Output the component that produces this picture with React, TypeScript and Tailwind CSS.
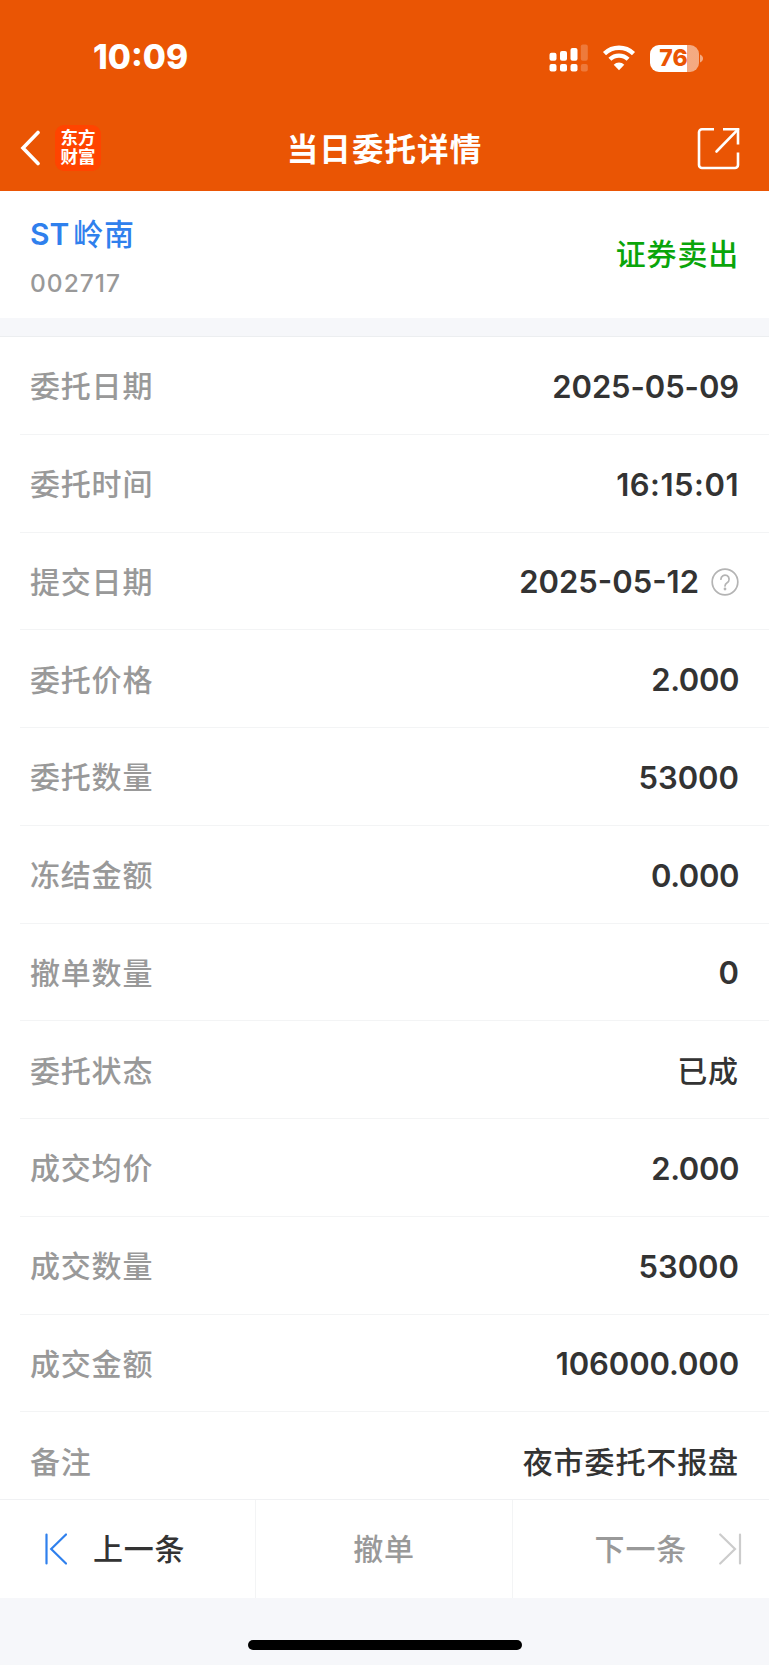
import type { ReactNode } from 'react';

const rows: { label: string; value: string; style?: string; help?: boolean }[] = [
  { label: '委托日期', value: '2025-05-09', style: '-tracking-[0.1px]' },
  { label: '委托时间', value: '16:15:01', style: 'tracking-[0.5px]' },
  { label: '提交日期', value: '2025-05-12', help: true },
  { label: '委托价格', value: '2.000', style: '-tracking-[0.4px]' },
  { label: '委托数量', value: '53000' },
  { label: '冻结金额', value: '0.000', style: '-tracking-[0.4px]' },
  { label: '撤单数量', value: '0' },
  { label: '委托状态', value: '已成', style: 'text-[30px] font-medium tracking-[0.9px]' },
  { label: '成交均价', value: '2.000', style: '-tracking-[0.4px]' },
  { label: '成交数量', value: '53000' },
  { label: '成交金额', value: '106000.000', style: '-tracking-[0.1px]' },
  { label: '备注', value: '夜市委托不报盘', style: 'text-[30px] font-medium tracking-[0.9px]' },
];

const StatusBar = () => (
  <div className="flex h-[108px] items-center justify-between pl-[93px] pr-[66px] pt-[8px]">
    <span className="text-[33.5px] font-extrabold leading-none text-white">10:09</span>
    <div className="flex items-center">
      <svg width="39" height="28" viewBox="0 0 39 28" fill="#fff">
        <rect x="0.5" y="8.7" width="7" height="8" rx="2" />
        <rect x="11" y="7" width="7" height="9.7" rx="2" />
        <rect x="21.5" y="4" width="7" height="12.7" rx="2" />
        <rect x="31.8" y="0.5" width="7" height="16.2" rx="2" opacity="0.22" />
        <rect x="0.5" y="20" width="7" height="7.5" rx="2" />
        <rect x="11" y="20" width="7" height="7.5" rx="2" />
        <rect x="21.5" y="20" width="7" height="7.5" rx="2" />
        <rect x="31.8" y="20" width="7" height="7.5" rx="2" opacity="0.22" />
      </svg>
      <svg className="ml-[14px]" width="34" height="26" viewBox="0 0 34 26" fill="none">
        <path d="M2.5 8.6a21 21 0 0 1 29 0" stroke="#fff" strokeWidth="4.4" />
        <path d="M7.9 14.3a13 13 0 0 1 18.2 0" stroke="#fff" strokeWidth="4.2" />
        <path d="M17 25.2l-5.3-5.5a7.8 7.8 0 0 1 10.6 0z" fill="#fff" />
      </svg>
      <div className="ml-[14px] flex items-center">
        <div className="flex h-[27px] w-[49px] items-center justify-center overflow-hidden rounded-[9px] bg-linear-to-r from-white from-76% to-white/50 to-76% pr-[2px]">
          <span className="text-[23px] font-extrabold leading-none text-[#ea5504]">76</span>
        </div>
        <svg className="ml-[1px]" width="3" height="9" viewBox="0 0 3 9">
          <path d="M0 0.5c4 1.8 4 6.2 0 8z" fill="#fff" opacity="0.5" />
        </svg>
      </div>
    </div>
  </div>
);

const NavBar = () => (
  <div className="grid h-[81px] grid-cols-[1fr_auto_1fr] items-center pl-[20px] pr-[29px]">
    <div className="flex items-center">
      <svg className="-mt-[2px]" width="21" height="36" viewBox="0 0 21 36" fill="none">
        <path d="M18 2.5L3 18l15 15.5" stroke="#fff" strokeWidth="3.6" strokeLinecap="round" />
      </svg>
      <div className="-mt-[2px] ml-[14px] flex h-[46px] w-[46px] flex-col items-center justify-center rounded-[9px] bg-[#ff4400] pb-px text-[17.5px] font-bold leading-[19px] text-white">
        <span>东方</span>
        <span>财富</span>
      </div>
    </div>
    <h1 className="ml-[9px] pt-[2px] text-[31.5px] font-bold leading-none tracking-[1.1px] text-white">当日委托详情</h1>
    <svg className="justify-self-end" width="43" height="43" viewBox="0 0 43 43" fill="none" stroke="#fff" strokeWidth="2.6">
      <path d="M17 2.3H5a3 3 0 0 0-3 3V38a3 3 0 0 0 3 3h33a3 3 0 0 0 3-3V25.5" />
      <path d="M26 2.3h15V17.5" />
      <path d="M41 2.3L19.5 24.5" strokeLinecap="round" />
    </svg>
  </div>
);

const HelpIcon = () => (
  <svg className="ml-[12px]" width="28" height="28" viewBox="0 0 28 28" fill="none" stroke="#b4b4b4" strokeLinecap="round">
    <circle cx="14" cy="14" r="12.8" strokeWidth="1.7" />
    <path d="M9.9 11.2a4.1 4.1 0 1 1 6.2 3.5c-1.5.9-2.1 1.6-2.1 3.3" strokeWidth="1.7" />
    <circle cx="14" cy="21" r="1.4" fill="#b4b4b4" stroke="none" />
  </svg>
);

const Row = ({ label, children }: { label: string; children: ReactNode }) => (
  <div className="ml-[20px] flex h-[97.75px] shrink-0 items-center justify-between border-b border-[#f3f4f5] pl-[10px] pr-[30px] pt-[2px]">
    <span className="text-[30px] font-medium leading-none tracking-[0.8px] text-[#999]">{label}</span>
    <div className="flex items-center text-[31px] font-semibold leading-none text-[#333]">{children}</div>
  </div>
);

const App = () => {
  return (
    <div className="flex h-[1665px] w-[769px] flex-col overflow-hidden bg-[#f6f7fa] font-[Inter,'Noto_Sans_CJK_SC',sans-serif]">
      <header className="h-[191px] shrink-0 bg-[#ea5504]">
        <StatusBar />
        <NavBar />
      </header>

      <section className="flex h-[127px] shrink-0 items-center justify-between bg-white px-[30px]">
        <div className="pt-[3px]">
          <div className="flex items-center text-[30px] font-medium leading-[44px] text-[#2f80ed]">
            <span className="font-semibold">ST</span>
            <span className="ml-[4px] tracking-[0.6px]">岭南</span>
          </div>
          <div className="mt-[10px] text-[24.5px] font-medium leading-[34px] tracking-[1px] text-[#999]">002717</div>
        </div>
        <span className="pb-[2px] text-[30px] font-medium leading-none tracking-[0.8px] text-[#0aa50a]">证券卖出</span>
      </section>

      <section className="mt-[18px] flex h-[1163px] shrink-0 flex-col overflow-hidden border-t border-[#eceef0] bg-white">
        {rows.map((row) => (
          <Row key={row.label} label={row.label}>
            <span className={row.style}>{row.value}</span>
            {row.help && <HelpIcon />}
          </Row>
        ))}
      </section>

      <footer className="grid h-[99px] shrink-0 grid-cols-3 divide-x divide-[#f3f4f5] border-t border-[#f0f1f3] bg-white text-[30px] font-medium leading-none tracking-[0.8px] text-[#999]">
        <button className="flex items-center pl-[44px] text-[#333]">
          <svg width="23" height="32" viewBox="0 0 23 32" fill="none" stroke="#2f80ed" strokeWidth="2.2" strokeLinecap="round">
            <path d="M2.5 1.5v29M22 1.5L7.2 16L22 30.5" />
          </svg>
          <span className="ml-[26px]">上一条</span>
        </button>
        <button className="flex items-center justify-center">撤单</button>
        <button className="flex items-center justify-end pr-[27px]">
          <span>下一条</span>
          <svg className="ml-[32px]" width="23" height="32" viewBox="0 0 23 32" fill="none" stroke="#ccc" strokeWidth="2.2" strokeLinecap="round">
            <path d="M21 1.5v29M1.2 1.5L16 16L1.2 30.5" />
          </svg>
        </button>
      </footer>

      <div className="flex h-[67px] shrink-0 justify-center pt-[42px]">
        <div className="h-[10px] w-[274px] rounded-full bg-black" />
      </div>
    </div>
  );
};

export default App;
